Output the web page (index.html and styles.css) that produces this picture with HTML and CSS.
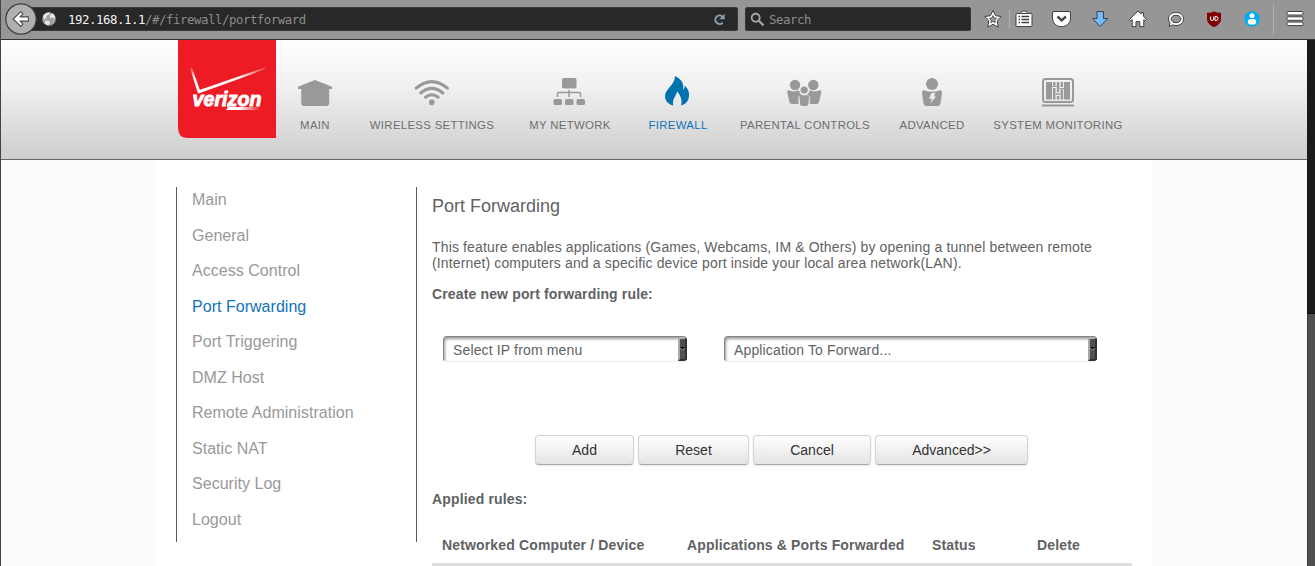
FILE: index.html
```html
<!DOCTYPE html>
<html lang="en">
<head>
<meta charset="utf-8">
<title>Port Forwarding</title>
<link rel="stylesheet" href="styles.css">
</head>
<body>
<div class="window">
  <div class="toolbar">
    <svg class="back" width="34" height="34" viewBox="0 0 34 34"><circle cx="17" cy="17" r="15.2" fill="#b0b0b0" stroke="#3c3c3c" stroke-width="1.2"/><path d="M9.2 17l7.6-7.4 2.2 2.2-3 3.1h8.4v4.2H16l3 3.1-2.2 2.2z" fill="#fff" stroke="#4a4a52" stroke-width="1.1" stroke-linejoin="round"/></svg>
    <div class="url">
      <svg width="14" height="14" viewBox="0 0 14 14"><circle cx="7" cy="7" r="6.8" fill="#a2a2a2"/><path d="M1 4l3-3 4-.5-1 2-3 1.500.5 2L2 7.500zM8 3l3-1.500 2.500 4-1.500 1-2-1-2 .5zM3 8.500l4 .5 1 2-2 2.500-3-2z" fill="#e6e6e6"/></svg>
      <span class="address"><b>192.168.1.1</b>/#/firewall/portforward</span>
      <svg class="reload" width="13" height="13" viewBox="0 0 13 13"><path d="M9.700 9.700A4.300 4.300 0 1 1 9.400 3.400" fill="none" stroke="#8d9cae" stroke-width="2"/><path d="M11.700.8v5.400H6.300z" fill="#8d9cae"/></svg>
    </div>
    <div class="search">
      <svg width="15" height="15" viewBox="0 0 15 15"><circle cx="5.700" cy="5.700" r="4" fill="none" stroke="#a6a6a6" stroke-width="1.900"/><path d="M8.800 8.800l4.700 4.700" stroke="#a6a6a6" stroke-width="2.300"/></svg>
      <span>Search</span>
    </div>
    <svg class="tools" width="344" height="39" viewBox="971 0 344 39">
      <g stroke="#3f4046" stroke-width="1" stroke-linejoin="round">
        <path d="M993 10.300l2.600 5.400 5.700.8-4.100 4 1 6.700-5.200-2.900-5.200 2.900 1-6.700-4.100-4 5.700-.8z" fill="#fff"/>
        <path d="M993 15.500l1.100 2.400 2.500.4-1.800 1.800.4 2.600-2.200-1.300-2.200 1.300.4-2.600-1.800-1.800 2.500-.4z" fill="#999" stroke-width=".8"/>
        <path d="M1017 13.500h3.500q.5-2.700 3.500-2.700t3.500 2.700h3.500q1 0 1 1v11q0 1-1 1h-14q-1 0-1-1v-11q0-1 1-1z" fill="#fff"/>
        <path d="M1054 11.500h15q1.500 0 1.500 1.500v5c0 5-4 8.700-9 8.700s-9-3.700-9-8.700v-5q0-1.500 1.500-1.500z" fill="#fff"/>
        <path d="M1097 11.500h6.500v7h4.200l-7.500 8-7.500-8h4.300z" fill="#70bdff"/>
        <path d="M1138 11l3.200 3v-1.500h2.300v3.900l3 3-1.200 1.200-1.500-1v7h-4v-5h-3.800v5h-3.800v-7l-1.500 1-1.200-1.200z" fill="#fff"/>
        <path fill-rule="evenodd" d="M1176 12.500c4.500 0 7.500 2.900 7.500 6.500s-3 6.500-7.500 6.500q-1.800 0-3.200-.6l-3.800 1.500 1-3.700q-1.500-1.500-1.500-3.700c0-3.600 3-6.500 7.500-6.500zm0 2.800c-3 0-4.900 1.600-4.900 3.700s1.900 3.700 4.900 3.700 4.900-1.600 4.900-3.700-1.900-3.700-4.900-3.700z" fill="#fff"/>
        <path d="M1288 11.500h14q1 0 1 1v1.500q0 1-1 1h-14q-1 0-1-1v-1.500q0-1 1-1zM1288 16.800h14q1 0 1 1v1.500q0 1-1 1h-14q-1 0-1-1v-1.500q0-1 1-1zM1288 22.100h14q1 0 1 1v1.500q0 1-1 1h-14q-1 0-1-1v-1.500q0-1 1-1z" fill="#fff"/>
      </g>
      <path d="M1021.500 16.500h7.500M1021.500 19.500h7.500M1021.500 22.500h7.500M1018.500 16.500h1.500M1018.500 19.500h1.500M1018.500 22.500h1.500" stroke="#3f4046" stroke-width="1.400"/>
      <path d="M1021 13.500h6" stroke="#3f4046"/>
      <path d="M1057.500 16.500l4.200 3.800 4.200-3.800" fill="none" stroke="#45464c" stroke-width="2.400"/>
      <path d="M1009.500 10v18M1273.500 4v31" stroke="#b2b2b2"/>
      <path d="M1214 11.200q3 2 7 1.500v6c0 4-3 6.500-7 8.500-4-2-7-4.500-7-8.500v-6q4 .5 7-1.500z" fill="#800000"/>
      <path d="M1210.500 16.500v2.500q0 1.500 1.600 1.500t1.600-1.500v-2.500M1215 16.500v4h1q2 0 2-2t-2-2z" fill="none" stroke="#fff" stroke-width="1"/>
      <circle cx="1252" cy="19" r="7.800" fill="#00aff0"/><circle cx="1252" cy="15.700" r="2.500" fill="#fff"/><rect x="1247.800" y="19" width="8.400" height="5.600" rx="2.800" fill="#fff"/>
    </svg>
  </div>

  <div class="viewport">
    <div class="page">
      <header class="masthead">
        <svg class="logo" width="98" height="98" viewBox="0 0 98 98">
          <defs>
            <linearGradient id="lift"><stop offset=".6" stop-color="#fff"/><stop offset="1" stop-color="#fff" stop-opacity=".1"/></linearGradient>
            <linearGradient id="drop" x2="0" y2="1"><stop offset="0" stop-color="#fff" stop-opacity=".1"/><stop offset=".4" stop-color="#fff"/></linearGradient>
            <linearGradient id="tail"><stop offset=".4" stop-color="#fff"/><stop offset="1" stop-color="#fff" stop-opacity="0"/></linearGradient>
          </defs>
          <path d="M0 0h98v98H10Q0 98 0 88z" fill="#ed1c24"/>
          <path d="M12 28l2-.5 8 23-2 3z" fill="url(#drop)"/>
          <path d="M20 50.500L88 27v2L20.500 53.500z" fill="url(#lift)"/>
          <text class="wordmark" x="14.500" y="66" textLength="69" lengthAdjust="spacingAndGlyphs">verizon</text>
          <path d="M52 64l-3.500 3h34l-1 3H48z" fill="url(#tail)"/>
        </svg>
        <nav class="nav">
          <a><svg width="36" height="32" viewBox="0 0 36 32"><path d="M18 4L35 10.800v2.200h-2.800v14q0 3-3 3H7.200q-3 0-3-3V13H1v-2.200z" fill="#999"/></svg><span>MAIN</span></a>
          <a><svg width="36" height="32" viewBox="0 0 36 32"><g fill="none" stroke="#999" stroke-width="3" stroke-linecap="round"><path d="M2.200 12.200q15.600-13.200 31.200 0M6.800 17q11-9.200 22 0M11.500 21.200q6.300-4.800 12.600 0"/></g><circle cx="17.800" cy="26.300" r="2.900" fill="#999"/></svg><span>WIRELESS SETTINGS</span></a>
          <a><svg width="36" height="32" viewBox="0 0 36 32"><g fill="#999"><rect x="10" y="2" width="14.500" height="10.500" rx="2"/><rect x="1.500" y="23" width="8.500" height="6" rx="1.500"/><rect x="13" y="23" width="8.500" height="6" rx="1.500"/><rect x="24.500" y="23" width="8.500" height="6" rx="1.500"/></g><path d="M5.500 21v-3q0-1.500 1.500-1.500h20q1.500 0 1.500 1.500v3M17 14v7" fill="none" stroke="#999" stroke-width="1.500"/></svg><span>MY NETWORK</span></a>
          <a class="current"><svg width="36" height="32" viewBox="0.500 0 36 32"><path d="M15.500 0C23 4 24.500 8 23.500 14q2-1 1.700-4.500Q30 14 29.500 19.500C29.500 25 26 28.500 21.500 29.500 23 26 21.500 19 17.500 15.500 17 20 12.500 22 13.700 29.500 9 28.500 5.500 25 5.500 20 5.500 13 15.500 9 15.500 0z" fill="#0073ae"/></svg><span>FIREWALL</span></a>
          <a><svg width="36" height="32" viewBox="1 0 36 32"><g fill="#999"><circle cx="9" cy="9" r="5.200"/><circle cx="27.300" cy="9" r="5.200"/><circle cx="18.200" cy="14" r="3.600"/><path d="M2.500 14.300q6 2.200 10.500 0 .8 4 2.500 4.800-2.500.5-2.500 3.400v5.500H6q-2.500 0-2.800-3L1.200 16q0-1.700 1.300-1.700zM34 14.300q-6 2.200-10.500 0-.8 4-2.500 4.800 2.500.5 2.500 3.400v5.500h7q2.500 0 2.800-3l2-9q0-1.700-1.300-1.700zM15 18.800q3.200 1.500 6.500 0 1.500 0 1.500 1.700l-.6 7.500q-.2 2-2.200 2h-4q-2 0-2.200-2l-.5-7.500q0-1.700 1.500-1.700z"/><path d="M12.800 20v8M23.700 20v8" stroke="#e6e6e6" stroke-width=".8"/></g></svg><span>PARENTAL CONTROLS</span></a>
          <a><svg width="36" height="32" viewBox="0 0 36 32"><circle cx="18" cy="8" r="6" fill="#999"/><path d="M10 14.300q8 3 16 0 2.200 0 2 2.200l-1.500 11q-.5 2.500-3 2.500h-11q-2.500 0-3-2.500L8 16.500q-.2-2.200 2-2.200z" fill="#999"/><path d="M17.500 17h4l-1.700 3.500h2.200l-5.500 7 1.500-4.800h-3z" fill="#efefef"/></svg><span>ADVANCED</span></a>
          <a><svg width="36" height="32" viewBox="0 0 36 32"><rect x="3" y="3" width="30" height="23" rx="2.500" fill="none" stroke="#999" stroke-width="2"/><path d="M2 29.500h32" stroke="#999" stroke-width="2"/><path d="M6 6h6v17.500H6zM24 6h6v17.500h-6zM13 12h2.500v11.500H13zM13 6h2.500v3H13zM16.800 6h2.500v10h-2.500zM20.600 6h2.500v5h-2.500zM20.600 14h2.500v9.500h-2.500zM16.800 20h2.500v3.500h-2.500zM12 9.500h4.500v1.500H12zM16 17.300h4v1.500h-4zM20 12h4v1.500h-4z" fill="#999"/></svg><span>SYSTEM MONITORING</span></a>
        </nav>
      </header>
      <div class="sheet">
        <ul class="side">
          <li>Main</li><li>General</li><li>Access Control</li><li class="current">Port Forwarding</li><li>Port Triggering</li><li>DMZ Host</li><li>Remote Administration</li><li>Static NAT</li><li>Security Log</li><li>Logout</li>
        </ul>
        <main class="content">
          <h1>Port Forwarding</h1>
          <p>This feature enables applications (Games, Webcams, IM &amp; Others) by opening a tunnel between remote<br>(Internet) computers and a specific device port inside your local area network(LAN).</p>
          <h2>Create new port forwarding rule:</h2>
          <div class="fields">
            <div class="select ip"><span>Select IP from menu</span><i><svg width="5" height="4" viewBox="0 0 5 4"><path d="M0 0h5L2.500 3z" fill="#000"/><path d="M.3 1l2.200 2.200L4.700 1" fill="none" stroke="#ddd" stroke-width=".7"/></svg></i></div>
            <div class="select app"><span>Application To Forward...</span><i><svg width="5" height="4" viewBox="0 0 5 4"><path d="M0 0h5L2.500 3z" fill="#000"/><path d="M.3 1l2.200 2.200L4.700 1" fill="none" stroke="#ddd" stroke-width=".7"/></svg></i></div>
          </div>
          <div class="actions"><button>Add</button><button>Reset</button><button>Cancel</button><button>Advanced&gt;&gt;</button></div>
          <h2>Applied rules:</h2>
          <div class="thead"><span>Networked Computer / Device</span><span>Applications &amp; Ports Forwarded</span><span>Status</span><span>Delete</span></div>
        </main>
      </div>
    </div>
    <div class="scrollbar"><div class="thumb"></div></div>
  </div>
</div>
</body>
</html>
```
FILE: styles.css
```css
* { box-sizing: border-box; }
body { margin: 0; overflow: hidden; font-family: "Liberation Sans", Arial, sans-serif; }
.window { width: 1315px; height: 566px; display: flex; flex-direction: column; overflow: hidden; border-left: 1px solid #444; }

.toolbar { height: 40px; flex: none; display: flex; align-items: flex-start; background: #969696; border-bottom: 1px solid #333; padding-left: 3px; }
.back { margin-top: 2px; position: relative; z-index: 1; flex: none; }
.url, .search { height: 24px; margin-top: 7px; display: flex; align-items: center; background: #282828; border: 1px solid #3a3a3a; border-radius: 2px; font-family: "DejaVu Sans Mono", monospace; font-size: 12.4px; letter-spacing: -.465px; color: #8c8c8c; flex: none; }
.url { width: 708px; margin-left: -8px; padding: 0 11px; }
.address { margin-left: 12px; white-space: pre; }
.address b { font-weight: normal; color: #f2f2f2; }
.reload { margin-left: auto; }
.search { width: 226px; margin-left: 7px; padding-left: 4px; gap: 4px; }
.tools { flex: none; }

.viewport { flex: 1; display: flex; min-height: 0; }
.page { width: 1306px; background: #fbfbfb; display: flex; flex-direction: column; overflow: hidden; }
.scrollbar { width: 8px; background: #505050; border-left: 1px solid #3c3c3c; }
.thumb { height: 274px; margin-left: -1px; background: #1a1a1a; border-bottom: 1px solid #0c0c0c; }

.masthead { height: 120px; flex: none; display: flex; padding-left: 177px; background: linear-gradient(#fff, #f0f0f0 40%, #cdcdcd); border-bottom: 1px solid #666; }
.logo { flex: none; }
.wordmark { font-size: 20px; font-weight: bold; font-style: italic; fill: #fff; stroke: #fff; stroke-width: .9px; }
.nav { display: grid; grid-template-columns: 78px 156px 120px 96px 158px 96px 156px; padding-top: 36px; }
.nav a { display: flex; flex-direction: column; align-items: center; color: #6d6e71; font-size: 11.4px; letter-spacing: .32px; line-height: 14px; white-space: nowrap; }
.nav svg { flex: none; }
.nav span { margin-top: 10px; }
.nav .current { color: #1173b8; }

.sheet { width: 997px; height: 406px; margin-left: 155px; background: #fff; display: flex; padding: 27px 0 0 20px; }
.side { width: 241px; height: 355px; margin: 0; padding: 0 0 0 15px; list-style: none; border: solid #58595b; border-width: 0 1px; font-size: 16px; letter-spacing: .03px; color: #999; flex: none; }
.side li { height: 35.5px; line-height: 26px; }
.side .current { color: #1173b8; }

.content { width: 715px; padding-left: 15px; color: #616264; font-size: 14px; letter-spacing: .146px; line-height: 16px; }
.content h1 { margin: 8px 0 0; font-size: 18px; letter-spacing: 0; line-height: 22px; font-weight: normal; }
.content p { margin: 22px 0 0; white-space: nowrap; }
.content h2 { margin: 15px 0 0; font-size: 14px; line-height: 16px; }
.fields { display: flex; gap: 37px; margin: 34px 0 0 11px; }
.select { height: 26px; display: flex; justify-content: space-between; padding-left: 9px; line-height: 27px; border: solid #858585; border-width: 1px 0 0 1px; border-bottom: 1px solid #f0f0f0; border-radius: 4px; box-shadow: inset 1px 2px 3px #999; overflow: hidden; }
.ip { width: 244px; }
.app { width: 373px; }
.select i { width: 9px; display: flex; align-items: center; justify-content: center; background: #505050; border: 2px solid; border-color: #b0b0b0 #333 #303030 #a8a8a8; }
.select i svg { flex: none; }
.actions { display: flex; gap: 4px; margin: 73px 0 0 103px; }
.actions button { height: 30px; border: 1px solid #d4d4d4; border-bottom-color: #a8a8a8; border-radius: 4px; padding: 0; background: linear-gradient(#fff, #e4e4e4); box-shadow: 0 1px 2px rgba(0,0,0,.1); font: 14px "Liberation Sans", Arial, sans-serif; color: #333; }
.actions button:nth-child(1) { width: 99px; }
.actions button:nth-child(2) { width: 111px; }
.actions button:nth-child(3) { width: 118px; }
.actions button:nth-child(4) { width: 153px; }
.actions + h2 { margin-top: 26px; }
.thead { width: 700px; display: grid; grid-template-columns: 245px 245px 105px 85px; padding: 0 10px 10px; margin-top: 30px; border-bottom: 3px solid #dedede; font-weight: bold; white-space: nowrap; }
```
